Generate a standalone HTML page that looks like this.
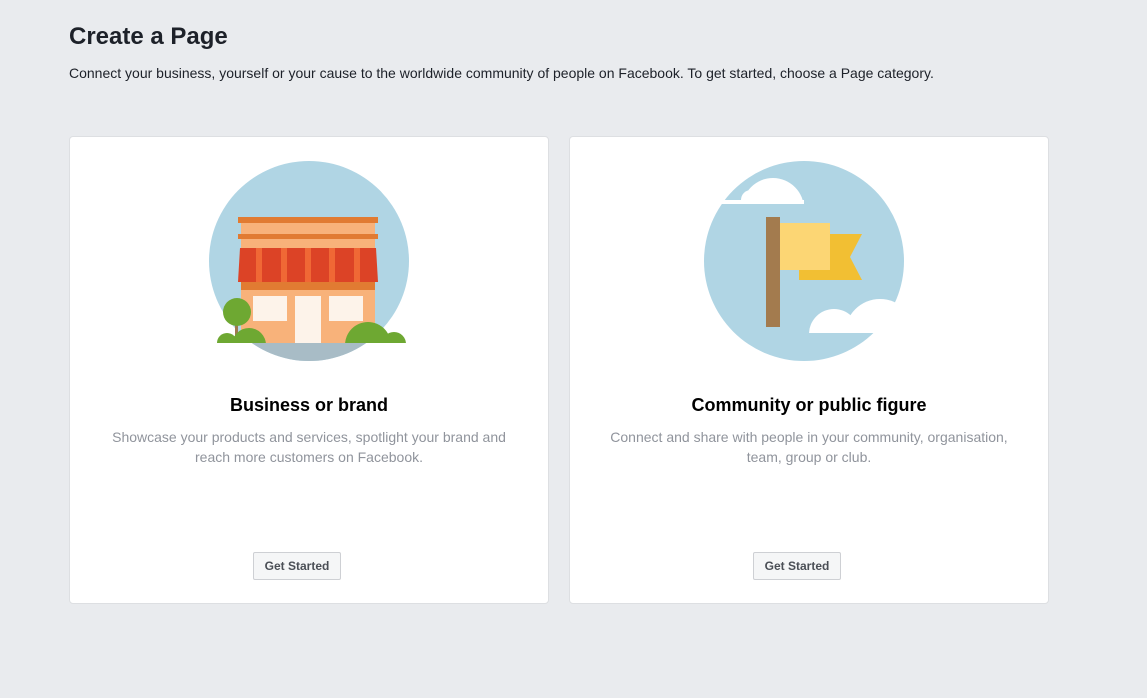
<!DOCTYPE html>
<html><head><meta charset="utf-8"><style>
body{margin:0;width:1147px;height:698px;background:#e9ebee;font-family:"Liberation Sans",Arial,sans-serif;position:relative;overflow:hidden}
h1{position:absolute;left:69px;top:23px;margin:0;font-size:24px;font-weight:bold;color:#1d2129}
.sub{position:absolute;left:69px;top:65px;font-size:14px;color:#1d2129}
.card{position:absolute;top:136px;width:478px;height:466px;background:#fff;border:1px solid #dddfe2;border-radius:4px}
.t{position:absolute;top:258px;left:0;right:0;text-align:center;font-size:18px;font-weight:bold;color:#000}
.d{position:absolute;top:290px;left:30px;right:30px;text-align:center;font-size:14px;line-height:20px;color:#90949c}
.b{position:absolute;top:415px;left:183px;width:86px;height:26px;border:1px solid #ced0d4;background:#f5f6f7;border-radius:2px;font-size:12px;font-weight:bold;color:#4b4f56;text-align:center;line-height:26px}
svg{position:absolute;left:0;top:0}
</style></head><body>
<h1>Create a Page</h1>
<div class="sub">Connect your business, yourself or your cause to the worldwide community of people on Facebook. To get started, choose a Page category.</div>
<div class="card" style="left:69px"><div class="t">Business or brand</div><div class="d">Showcase your products and services, spotlight your brand and reach more customers on Facebook.</div><div class="b">Get Started</div></div>
<div class="card" style="left:569px"><div class="t">Community or public figure</div><div class="d">Connect and share with people in your community, organisation, team, group or club.</div><div class="b">Get Started</div></div>
<svg width="1147" height="698">
<defs>
<clipPath id="c1"><circle cx="309" cy="261" r="100"/></clipPath>
<clipPath id="g1"><rect x="0" y="0" width="1147" height="343"/></clipPath>
<clipPath id="t2"><rect x="0" y="0" width="1147" height="204"/></clipPath>
<clipPath id="b2"><rect x="0" y="0" width="1147" height="333"/></clipPath>
</defs>
<circle cx="309" cy="261" r="100" fill="#b0d5e4"/>
<rect x="200" y="343" width="220" height="30" fill="#a8bcc6" clip-path="url(#c1)"/>
<rect x="241" y="223" width="134" height="120" fill="#f8b27a"/>
<rect x="238" y="217" width="140" height="6" fill="#e17b32"/>
<rect x="238" y="234" width="140" height="5" fill="#e17b32"/>
<polygon points="240,248 376,248 378,282 238,282" fill="#dc4326"/>
<g fill="#f06835"><rect x="256" y="248" width="6" height="34"/><rect x="281" y="248" width="6" height="34"/><rect x="305" y="248" width="6" height="34"/><rect x="329" y="248" width="6" height="34"/><rect x="354" y="248" width="6" height="34"/></g>
<rect x="241" y="282" width="134" height="8" fill="#e17b32"/>
<g fill="#fdf3ea"><rect x="253" y="296" width="34" height="25"/><rect x="295" y="296" width="26" height="47"/><rect x="329" y="296" width="34" height="25"/></g>
<rect x="235" y="318" width="3" height="25" fill="#a0784f"/>
<g fill="#6ea832" clip-path="url(#g1)"><circle cx="237" cy="312" r="14"/><circle cx="227" cy="343" r="10"/><circle cx="249" cy="345" r="17"/><circle cx="368" cy="345" r="23"/><circle cx="394" cy="344" r="12"/></g>
<circle cx="804" cy="261" r="100" fill="#b0d5e4"/>
<g fill="#fff" clip-path="url(#t2)"><circle cx="773" cy="209" r="31"/><circle cx="751" cy="200" r="10"/><rect x="705" y="200" width="99" height="4"/></g>
<g fill="#fff" clip-path="url(#b2)"><circle cx="834" cy="334" r="25"/><circle cx="880" cy="334" r="35"/></g>
<polygon points="799,234 862,234 850,257 862,280 799,280" fill="#f2bf33"/>
<rect x="780" y="223" width="50" height="47" fill="#fcd674"/>
<rect x="766" y="217" width="14" height="110" fill="#a37b4e"/>
</svg>
</body></html>
